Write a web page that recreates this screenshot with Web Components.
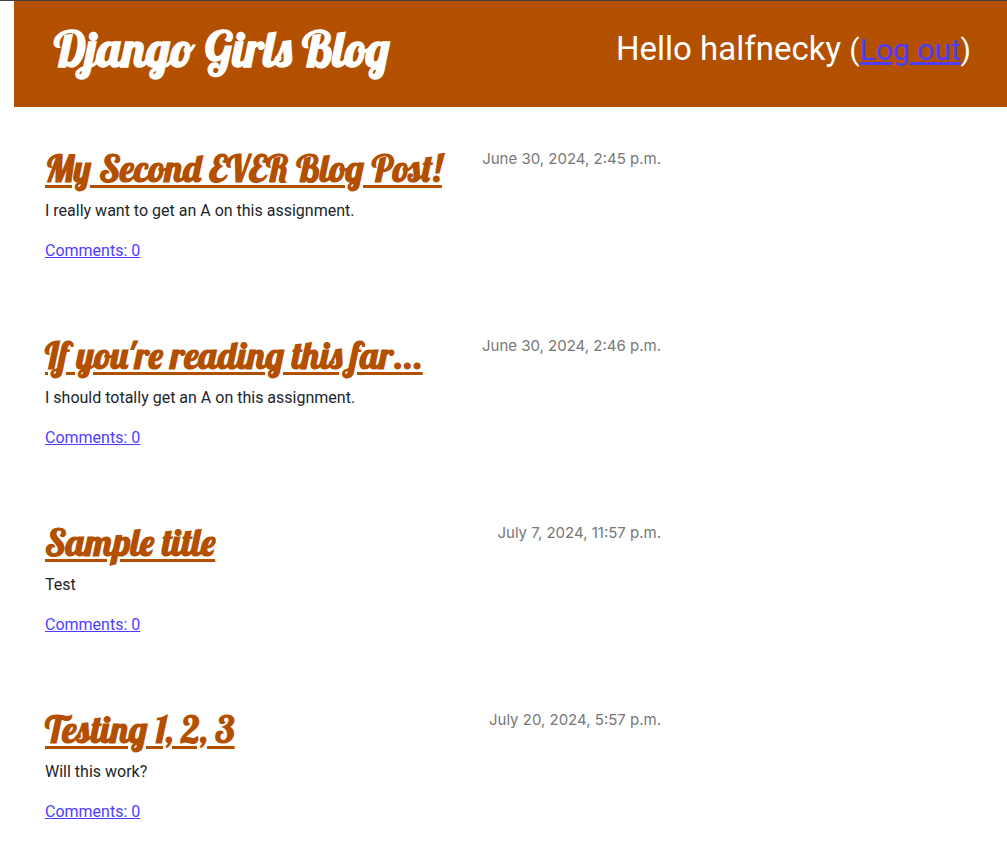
<!DOCTYPE html>
<html lang="en">
<head>
<meta charset="utf-8">
<title>Django Girls Blog</title>
<style>
  body {
    margin: 0;
    border-top: 1px solid #424242;
    background: #fff;
    color: #212529;
    font: 16px/24px Roboto, "Liberation Sans", sans-serif;
    --brand: #b35000;
    --link: #4f3dff;
    --display: Lobster, "Liberation Serif", serif;
  }
</style>
</head>
<body>
<blog-page>
  <blog-header slot="header" user="halfnecky">Django Girls Blog</blog-header>
  <blog-post date="June 30, 2024, 2:45 p.m." comments="0"><span slot="title">My Second EVER Blog Post!</span>I really want to get an A on this assignment.</blog-post>
  <blog-post date="June 30, 2024, 2:46 p.m." comments="0"><span slot="title">If you're reading this far...</span>I should totally get an A on this assignment.</blog-post>
  <blog-post date="July 7, 2024, 11:57 p.m." comments="0"><span slot="title">Sample title</span>Test</blog-post>
  <blog-post date="July 20, 2024, 5:57 p.m." comments="0"><span slot="title">Testing 1, 2, 3</span>Will this work?</blog-post>
</blog-page>
<script>
class BlogPage extends HTMLElement {
  constructor() {
    super();
    this.attachShadow({ mode: "open" }).innerHTML = `
      <style>
        :host { display: block; padding-left: 14px; }
        main { box-sizing: border-box; width: 66.6667%; padding: 40px 15px 0 31px; }
      </style>
      <slot name="header"></slot>
      <main><slot></slot></main>`;
  }
}

class BlogHeader extends HTMLElement {
  constructor() {
    super();
    this.attachShadow({ mode: "open" }).innerHTML = `
      <style>
        :host { display: block; background: var(--brand); color: #fff; }
        header { display: flex; justify-content: space-between; align-items: flex-start; padding: 20px 36px 29px 40px; }
        h1 { margin: 0; font: 700 48px/56px var(--display); }
        h1 a { color: inherit; text-decoration: none; }
        p { margin: 0; font-size: 33px; line-height: 56px; white-space: nowrap; }
        small { font-size: 30px; }
        small a { color: var(--link); }
      </style>
      <header>
        <h1><a href="#"><slot></slot></a></h1>
        <p>Hello <span class="user"></span> <small>(<a href="#">Log out</a>)</small></p>
      </header>`;
    this.shadowRoot.querySelector(".user").textContent = this.getAttribute("user");
  }
}

class BlogPost extends HTMLElement {
  constructor() {
    super();
    this.attachShadow({ mode: "open" }).innerHTML = `
      <style>
        :host { display: block; margin-bottom: 71px; }
        :host(:last-of-type) { margin-bottom: 0; }
        .top { display: flex; justify-content: space-between; align-items: flex-start; }
        h2 { margin: 0 0 10px; font: 700 37px/42px var(--display); white-space: nowrap; }
        h2 a { color: var(--brand); text-decoration-thickness: 3px; text-underline-offset: 3px; }
        time { color: #777; font: 15px/24px Inter, "Liberation Sans", sans-serif; white-space: nowrap; }
        p { margin: 0 0 16px; }
        .comments { color: var(--link); }
      </style>
      <article>
        <div class="top">
          <h2><a href="#"><slot name="title"></slot></a></h2>
          <time></time>
        </div>
        <p><slot></slot></p>
        <a class="comments" href="#"></a>
      </article>`;
    this.shadowRoot.querySelector("time").textContent = this.getAttribute("date");
    this.shadowRoot.querySelector(".comments").textContent = "Comments: " + this.getAttribute("comments");
  }
}

customElements.define("blog-page", BlogPage);
customElements.define("blog-header", BlogHeader);
customElements.define("blog-post", BlogPost);
</script>
</body>
</html>
